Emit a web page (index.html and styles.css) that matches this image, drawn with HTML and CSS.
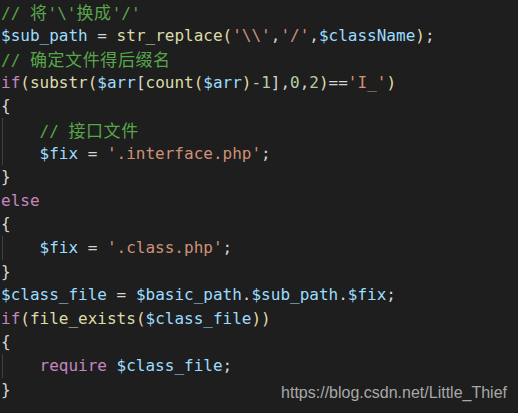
FILE: index.html
```html
<!DOCTYPE html>
<html lang="zh">
<head>
<meta charset="utf-8">
<title>code</title>
<link rel="stylesheet" href="styles.css">
</head>
<body>
<div class="editor">
  <div class="ln"><span class="c">// <span class="cj">将</span>'\'<span class="cj">换成</span>'/'</span></div>
  <div class="ln"><span class="v">$sub_path</span> = <span class="f">str_replace</span><span class="p">(</span><span class="s">'\\'</span>,<span class="s">'/'</span>,<span class="v">$className</span><span class="p">)</span>;</div>
  <div class="ln"><span class="c">// <span class="cj">确定文件得后缀名</span></span></div>
  <div class="ln"><span class="k">if</span><span class="p">(</span><span class="f">substr</span><span class="p">(</span><span class="v">$arr</span>[<span class="f">count</span><span class="p">(</span><span class="v">$arr</span><span class="p">)</span><span class="n">-1</span>],<span class="n">0</span>,<span class="n">2</span><span class="p">)</span>==<span class="s">'I_'</span><span class="p">)</span></div>
  <div class="ln">{</div>
  <div class="ind">
    <div class="ln"><span class="c">// <span class="cj">接口文件</span></span></div>
    <div class="ln"><span class="v">$fix</span> = <span class="s">'.interface.php'</span>;</div>
  </div>
  <div class="ln">}</div>
  <div class="ln"><span class="k">else</span></div>
  <div class="ln">{</div>
  <div class="ind">
    <div class="ln"><span class="v">$fix</span> = <span class="s">'.class.php'</span>;</div>
  </div>
  <div class="ln">}</div>
  <div class="ln"><span class="v">$class_file</span> = <span class="v">$basic_path</span>.<span class="v">$sub_path</span>.<span class="v">$fix</span>;</div>
  <div class="ln"><span class="k">if</span><span class="p">(</span><span class="f">file_exists</span><span class="p">(</span><span class="v">$class_file</span><span class="p">))</span></div>
  <div class="ln">{</div>
  <div class="ind">
    <div class="ln"><span class="k">require</span> <span class="v">$class_file</span>;</div>
  </div>
  <div class="ln">}</div>
</div>
<div class="wm">https://blog.csdn.net/Little_Thief</div>
</body>
</html>
```
FILE: styles.css
```css
html, body {
  margin: 0;
  padding: 0;
  background: #1e1e1e;
  height: 100%;
  overflow: hidden;
}
body {
  position: relative;
}
.editor {
  padding-left: 1px;
  font-family: "DejaVu Sans Mono", "Noto Sans CJK SC", monospace;
  font-size: 16px;
  line-height: 23.6px;
  color: #d4d4d4;
}
.ln {
  white-space: pre;
  height: 23.6px;
}
.cj {
  font-family: "Noto Sans CJK SC", sans-serif;
  font-size: 17px;
  letter-spacing: 0.6px;
  line-height: 23.6px;
}
.ind {
  margin-left: 1px;
  border-left: 1px solid #404040;
  padding-left: 36.5px;
}
.c { color: #57a64a; }
.v { color: #9cdcfe; }
.f { color: #dcdcaa; }
.s { color: #ce9178; }
.n { color: #b5cea8; }
.k { color: #c586c0; }
.p { color: #e2d9a8; }
.wm {
  position: absolute;
  right: 11px;
  bottom: 11px;
  font-family: "Liberation Sans", Arial, sans-serif;
  font-size: 16px;
  color: #a8a8a8;
  white-space: nowrap;
}
```
